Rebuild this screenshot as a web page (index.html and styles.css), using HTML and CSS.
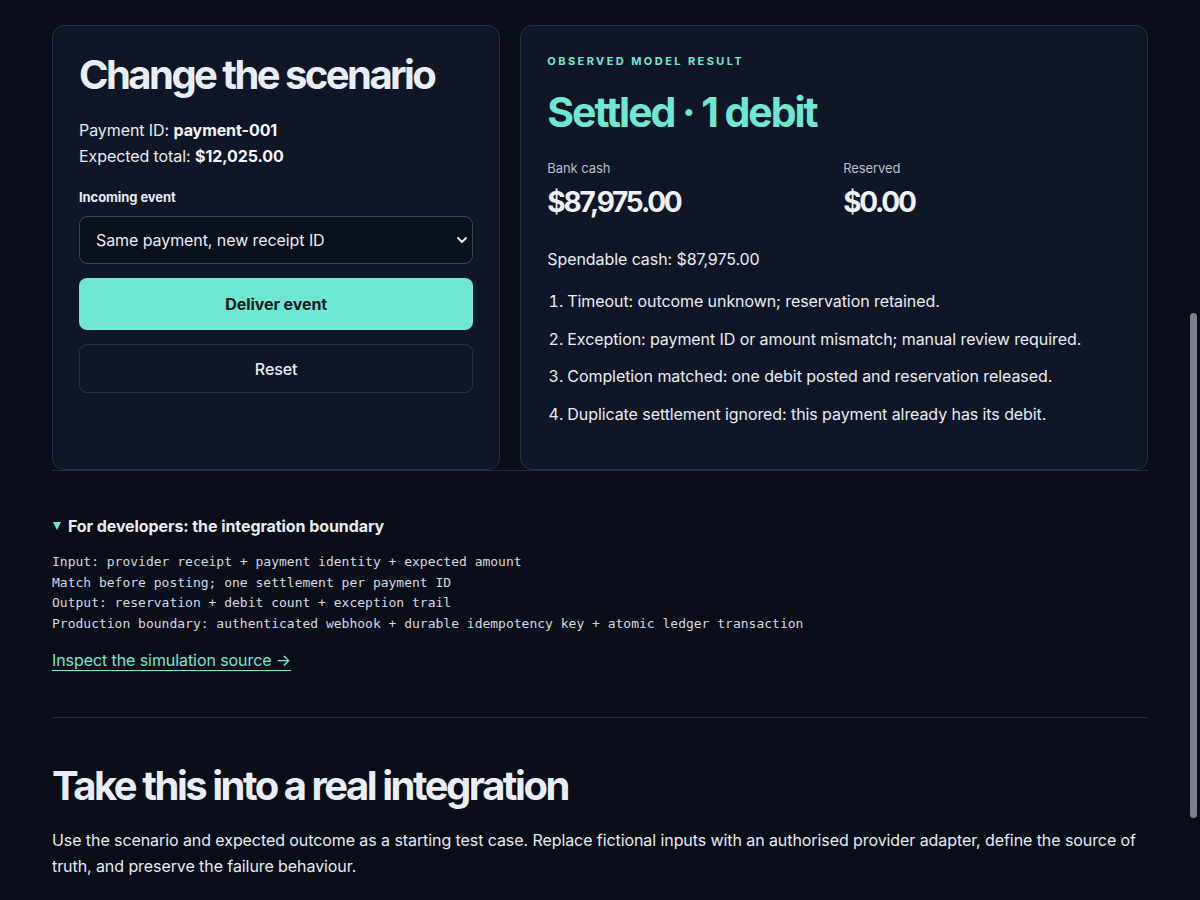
FILE: index.html
```html
<!DOCTYPE html>
<html lang="en">
<head>
<meta charset="utf-8">
<title>Scenario</title>
<link rel="stylesheet" href="styles.css">
</head>
<body>
<main class="page">
  <section class="lab">
    <div class="card controls">
      <h2 class="card-title">Change the scenario</h2>
      <p class="meta">Payment ID: <strong>payment-001</strong></p>
      <p class="meta">Expected total: <strong>$12,025.00</strong></p>
      <label class="field-label" for="event">Incoming event</label>
      <div class="select-wrap">
        <select id="event" class="select">
          <option>Same payment, new receipt ID</option>
        </select>
        <svg class="chev" viewBox="0 0 10 6" width="10" height="6" aria-hidden="true"><path d="M1 1l4 4 4-4" fill="none" stroke="#e8ecf4" stroke-width="1.8" stroke-linecap="round" stroke-linejoin="round"/></svg>
      </div>
      <button class="btn primary">Deliver event</button>
      <button class="btn ghost">Reset</button>
    </div>
    <div class="card result">
      <p class="eyebrow">Observed model result</p>
      <h2 class="status">Settled · 1 debit</h2>
      <div class="stats">
        <div class="stat">
          <span class="stat-label">Bank cash</span>
          <span class="stat-value">$87,975.00</span>
        </div>
        <div class="stat">
          <span class="stat-label">Reserved</span>
          <span class="stat-value">$0.00</span>
        </div>
      </div>
      <p class="spendable">Spendable cash: $87,975.00</p>
      <ol class="log">
        <li>Timeout: outcome unknown; reservation retained.</li>
        <li>Exception: payment ID or amount mismatch; manual review required.</li>
        <li>Completion matched: one debit posted and reservation released.</li>
        <li>Duplicate settlement ignored: this payment already has its debit.</li>
      </ol>
    </div>
  </section>

  <details class="dev" open>
    <summary class="dev-summary"><span class="tri"></span>For developers: the integration boundary</summary>
    <pre class="code">Input: provider receipt + payment identity + expected amount
Match before posting; one settlement per payment ID
Output: reservation + debit count + exception trail
Production boundary: authenticated webhook + durable idempotency key + atomic ledger transaction</pre>
    <a class="src-link" href="#">Inspect the simulation source →</a>
  </details>

  <section class="next">
    <h2 class="next-title">Take this into a real integration</h2>
    <p class="next-text">Use the scenario and expected outcome as a starting test case. Replace fictional inputs with an authorised provider adapter, define the source of truth, and preserve the failure behaviour.</p>
  </section>
</main>
<div class="scroll-thumb" aria-hidden="true"></div>
</body>
</html>
```

FILE: styles.css
```css
* { box-sizing: border-box; }
html, body {
  margin: 0;
  height: 900px;
  overflow: hidden;
  background: #0a0e19;
}
body {
  font-family: Inter, "Noto Sans", sans-serif;
  color: #e8ecf4;
  font-size: 16px;
  line-height: 1.6;
  letter-spacing: -0.005em;
}
.page {
  width: 1096px;
  margin: 0 auto;
  padding-top: 25px;
}
.lab {
  display: grid;
  grid-template-columns: 5fr 7fr;
  gap: 20px;
  border-bottom: 1px solid #242c3a;
}
.card {
  background: #0f1726;
  border: 1px solid #263041;
  border-radius: 12px;
  padding: 24px 26px 28px;
  height: 445px;
}
.card-title {
  margin: 0 0 18px;
  font-size: 40px;
  line-height: 49px;
  font-weight: 700;
  letter-spacing: -0.064em;
  color: #e9edf8;
}
.meta {
  margin: 0;
  font-size: 16px;
  line-height: 26px;
  color: #e6eaf2;
}
.meta strong { font-weight: 700; color: #f2f4fa; }
.field-label {
  display: block;
  margin-top: 18px;
  font-size: 13px;
  font-weight: 700;
  line-height: 20px;
  color: #e6eaf2;
}
.select-wrap {
  position: relative;
  margin-top: 9px;
}
.select {
  appearance: none;
  -webkit-appearance: none;
  width: 100%;
  height: 48px;
  padding: 0 36px 0 16px;
  background: #0a101c;
  color: #e8ecf4;
  border: 1px solid #3a4456;
  border-radius: 8px;
  font-family: Inter, "Noto Sans", sans-serif;
  font-size: 16px;
  letter-spacing: -0.005em;
}
.chev {
  position: absolute;
  right: 6px;
  top: 21px;
}
.btn {
  display: block;
  width: 100%;
  border-radius: 8px;
  font-family: Inter, "Noto Sans", sans-serif;
  font-size: 16px;
  letter-spacing: -0.005em;
  cursor: pointer;
}
.primary {
  margin-top: 14px;
  height: 52px;
  background: #6ee7d3;
  border: none;
  color: #07201c;
  font-weight: 700;
}
.ghost {
  margin-top: 14px;
  height: 49px;
  background: transparent;
  border: 1px solid #283244;
  color: #e8ecf4;
  font-weight: 500;
}
.eyebrow {
  margin: 1px 0 0;
  font-size: 11px;
  line-height: 20px;
  font-weight: 700;
  letter-spacing: 0.22em;
  text-transform: uppercase;
  color: #6ee7d3;
}
.status {
  margin: 15px 0 0;
  font-size: 41px;
  line-height: 52px;
  font-weight: 700;
  letter-spacing: -0.05em;
  color: #6ee7d3;
}
.stats {
  display: grid;
  grid-template-columns: 1fr 1fr;
  gap: 18px;
  margin-top: 20px;
}
.stat { display: flex; flex-direction: column; }
.stat-label {
  font-size: 13px;
  line-height: 20px;
  color: #b7bfcc;
}
.stat-value {
  margin-top: 7px;
  font-size: 28px;
  line-height: 34px;
  font-weight: 700;
  letter-spacing: -0.08em;
  color: #eef1f8;
}
.spendable {
  margin: 27px 0 0;
  font-size: 16px;
  line-height: 26px;
}
.log {
  margin: 16px 0 0;
  padding-left: 20px;
}
.log li {
  font-size: 16px;
  line-height: 26px;
  margin-bottom: 11.7px;
}
.dev {
  margin-top: 44px;
}
.dev-summary {
  list-style: none;
  font-size: 16px;
  font-weight: 700;
  line-height: 22px;
  display: flex;
  align-items: center;
  cursor: pointer;
}
.dev-summary::-webkit-details-marker { display: none; }
.tri {
  width: 0;
  height: 0;
  margin: 0 7px 0 1px;
  border-left: 4.5px solid transparent;
  border-right: 4.5px solid transparent;
  border-top: 8px solid #6ee7d3;
}
.code {
  margin: 15px 0 0;
  font-family: "DejaVu Sans Mono", "Liberation Mono", monospace;
  font-size: 13px;
  line-height: 20.7px;
  letter-spacing: 0;
  color: #d3d8e2;
}
.src-link {
  display: inline-block;
  margin-top: 14px;
  color: #6ee7d3;
  font-size: 16px;
  line-height: 22px;
  text-decoration: underline;
  text-underline-offset: 4px;
  text-decoration-thickness: 1px;
}
.next {
  margin-top: 44px;
  border-top: 1px solid #242c3a;
  padding-top: 42px;
}
.next-title {
  margin: 0;
  font-size: 40px;
  line-height: 52px;
  font-weight: 700;
  letter-spacing: -0.062em;
  color: #e9edf8;
}
.next-text {
  margin: 15px 0 0;
  font-size: 16px;
  line-height: 26px;
  color: #e6eaf2;
}
.scroll-thumb {
  position: fixed;
  right: 3px;
  top: 313px;
  width: 7px;
  height: 505px;
  border-radius: 4px;
  background: #7d808b;
}
```
